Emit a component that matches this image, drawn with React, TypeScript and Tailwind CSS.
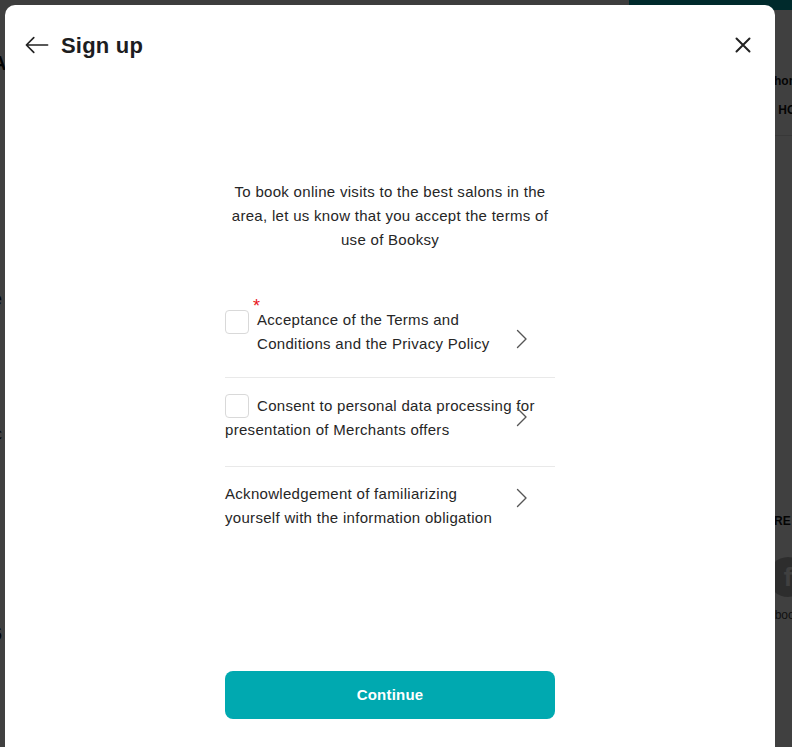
import React from 'react';

const Chevron = () => (
  <svg width="12" height="20" viewBox="0 0 12 20" fill="none" className="text-[#555]">
    <polyline points="1.5,1.5 10,10 1.5,18.5" stroke="currentColor" strokeWidth="1.4" strokeLinecap="round" strokeLinejoin="round" />
  </svg>
);

const Checkbox = () => (
  <span className="inline-block w-6 h-6 shrink-0 rounded-[4px] border border-[#d9d9d9] bg-white align-middle" />
);

// dimmed page sitting behind the modal
const BackgroundPage = () => (
  <div className="flex flex-col w-full h-full bg-white text-[#111] whitespace-nowrap">
    <div className="flex h-[10px]">
      <div className="w-[629px] bg-[#f4f4f4]" />
      <div className="flex-1 bg-[#00a8b0]" />
    </div>
    <div className="flex flex-1">
      <div className="w-[40px] flex flex-col text-[15px] -ml-[8px]">
        <span className="mt-[38px] text-[20px] font-bold">A</span>
        <span className="mt-[208px] text-[18px]">e</span>
        <span className="mt-[2px] text-[13px] text-[#777]">a</span>
        <span className="mt-[90px] text-[14px]">C</span>
        <span className="mt-[90px] text-[14px]">s</span>
        <span className="mt-[64px] text-[18px]">6</span>
        <span className="text-[13px] text-[#777]">e</span>
      </div>
      <div className="flex-1" />
      <div className="w-[22px] flex flex-col">
        <span className="mt-[62px] ml-[4px] text-[12px] font-semibold">home</span>
        <span className="mt-[11px] -ml-[3px] text-[12px] font-bold">S HOURS</span>
        <div className="mt-[16px] h-px bg-[#ddd]" />
        <span className="mt-[376px] ml-[4px] text-[12px] font-bold">RE</span>
        <div className="mt-[27px] w-[40px] h-[40px] rounded-full bg-[#b4b4b4] ml-[-2px] flex items-center justify-center text-white font-bold text-[26px]">f</div>
        <span className="mt-[9px] -ml-[18px] text-[12px] text-[#444]">facebook</span>
      </div>
    </div>
  </div>
);

export default function App() {
  return (
    <div className="relative w-[792px] h-[747px] overflow-hidden" style={{ fontFamily: '"Liberation Sans", Arial, sans-serif' }}>
      <BackgroundPage />
      <div className="absolute inset-0 bg-black/75" />

      <div className="absolute left-[5px] top-[5px] w-[770px] h-[790px] rounded-[10px] bg-white flex flex-col">
        <div className="h-[80px] flex items-center px-5">
          <button className="w-6 h-6 flex items-center justify-center text-[#222]">
            <svg width="26" height="20" viewBox="0 0 26 20" fill="none">
              <path d="M24.5 10H1.5M9.5 2L1.5 10L9.5 18" stroke="currentColor" strokeWidth="1.8" strokeLinecap="round" strokeLinejoin="round" />
            </svg>
          </button>
          <h1 className="ml-3 text-[22px] font-bold text-[#1d1d1f] tracking-[0.2px]">Sign up</h1>
          <button className="ml-auto w-6 h-6 flex items-center justify-center text-[#222]">
            <svg width="16" height="16" viewBox="0 0 16 16" fill="none">
              <path d="M1.5 1.5L14.5 14.5M14.5 1.5L1.5 14.5" stroke="currentColor" strokeWidth="2" strokeLinecap="round" />
            </svg>
          </button>
        </div>

        <div className="mx-auto w-[330px] flex flex-col text-[15px] leading-6 tracking-[0.3px] text-[#262626]">
          <p className="mt-[95px] text-center">
            To book online visits to the best salons in the area, let us know that you accept the terms of use of Booksy
          </p>

          <div className="relative mt-10 pt-4 pb-[21px] pr-[50px] border-b border-[#e9e9e9] flex gap-2">
            <div className="pt-px"><Checkbox /></div>
            <span className="relative">
              <span className="absolute -top-[14px] -left-[4px] text-[#e8141b] text-[18px] leading-6">*</span>
              Acceptance of the Terms and Conditions and the Privacy Policy
            </span>
            <div className="absolute right-[27px] top-[37px]"><Chevron /></div>
          </div>

          <div className="relative pt-4 pb-6 border-b border-[#e9e9e9]">
            <p>
              <span className="inline-block w-6 h-6 rounded-[4px] border border-[#d9d9d9] align-top mr-2" />
              Consent to personal data processing for presentation of Merchants offers
            </p>
            <div className="absolute right-[27px] top-[29px]"><Chevron /></div>
          </div>

          <div className="relative pt-[15px] pb-6 pr-[56px]">
            <p>Acknowledgement of familiarizing yourself with the information obligation</p>
            <div className="absolute right-[27px] top-[21px]"><Chevron /></div>
          </div>

          <button className="mt-[117px] h-12 w-full rounded-lg bg-[#00a9b0] text-white text-[15px] font-bold tracking-[0.2px]">
            Continue
          </button>
        </div>
      </div>
    </div>
  );
}
